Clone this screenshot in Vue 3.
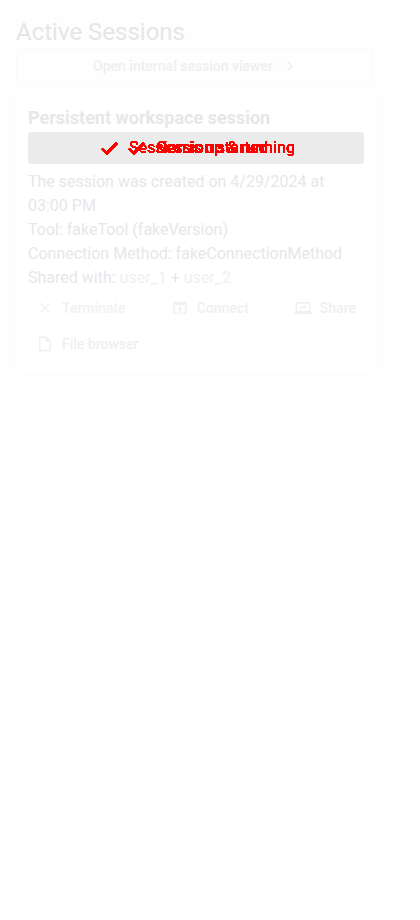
<script setup>
const details = [
  'The session was created on 4/29/2024 at 03:00 PM',
  'Tool: fakeTool (fakeVersion)',
  'Connection Method: fakeConnectionMethod',
]
const states = ['Session is up & running', 'Session started']
const check = 'M9.6 16 5.7 12.1 4.3 13.5 9.6 18.7 20.7 7.6 19.3 6.2z'
const actions = [
  { label: 'Terminate', tone: 'danger', icon: 'M19 6.41 17.59 5 12 10.59 6.41 5 5 6.41 10.59 12 5 17.59 6.41 19 12 13.41 17.59 19 19 17.59 13.41 12z' },
  { label: 'Connect', tone: 'primary', icon: 'M19 4H5c-1.11 0-2 .9-2 2v12c0 1.1.89 2 2 2h4v-2H5V8h14v10h-4v2h4c1.1 0 2-.9 2-2V6c0-1.1-.89-2-2-2zm-7 6-4 4h3v6h2v-6h3l-4-4z' },
  { label: 'Share', tone: 'primary', icon: 'M20 18c1.1 0 1.99-.9 1.99-2L22 6c0-1.1-.9-2-2-2H4c-1.1 0-2 .9-2 2v10c0 1.1.9 2 2 2H0v2h24v-2h-4zM4 6h16v10H4zM8 14h1.5v-1.5c0-.8.4-1.2 1.2-1.2H13V13l3.5-2.7L13 7.7v1.8h-2.3C9 9.5 8 10.6 8 12.2z' },
  { label: 'File browser', tone: 'primary', icon: 'M14 2H6c-1.1 0-1.99.9-1.99 2L4 20c0 1.1.89 2 1.99 2H18c1.1 0 2-.9 2-2V8l-6-6zM6 20V4h7v5h5v11H6z' },
]
</script>

<template>
  <main class="page">
    <h1>Active Sessions</h1>
    <button class="viewer">
      <span>Open internal session viewer</span>
      <svg viewBox="0 0 24 24"><path d="M10 6 8.59 7.41 13.17 12l-4.58 4.59L10 18l6-6z" /></svg>
    </button>
    <section class="card">
      <h2>Persistent workspace session</h2>
      <div class="status">
        <svg class="defs" width="0" height="0">
          <filter id="solid" color-interpolation-filters="sRGB">
            <feComponentTransfer><feFuncA type="linear" slope="40" intercept="-4" /></feComponentTransfer>
          </filter>
        </svg>
        <div v-for="state in states" :key="state" class="state">
          <svg viewBox="0 0 24 24"><path :d="check" /></svg>
          <span>{{ state }}</span>
        </div>
      </div>
      <p v-for="line in details" :key="line">{{ line }}</p>
      <p>Shared with: <span class="user">user_1</span> + <span class="user">user_2</span></p>
      <div class="actions">
        <button v-for="a in actions" :key="a.label" :class="['action', a.tone]">
          <svg viewBox="0 0 24 24"><path fill-rule="evenodd" :d="a.icon" /></svg>
          <span>{{ a.label }}</span>
        </button>
      </div>
    </section>
  </main>
</template>

<style>
body { background: #fefefe; }
</style>

<style scoped>
.page {
  box-sizing: border-box;
  min-height: 920px;
  padding: 16px;
  font-family: Roboto, sans-serif;
  font-size: 16px;
  line-height: 24px;
  color: #e7e7e7;
}
h1 { margin: 0; font-size: 24px; line-height: 32px; font-weight: 400; color: #e6e6e6; }
button { border: 0; background: none; font: 500 14px/20px Roboto, sans-serif; display: flex; align-items: center; padding: 0; }
svg { fill: currentColor; flex: none; }
.viewer {
  box-sizing: border-box;
  width: 357px;
  height: 36px;
  justify-content: center;
  gap: 8px;
  padding-left: 3px;
  border: 1px solid #fafafa;
  border-radius: 4px;
  color: #efefef;
}
.viewer svg { width: 18px; height: 18px; }
.card {
  box-sizing: border-box;
  width: 360px;
  margin-top: 8px;
  padding: 14px 12px 12px;
  height: 282px;
  border-radius: 8px;
  background: #fff;
  box-shadow: 0 1px 3px rgba(0, 0, 0, 0.02);
}
h2 { margin: 0; font-size: 18px; line-height: 24px; font-weight: 700; color: #e7e7e7; }
.status {
  display: grid;
  height: 32px;
  margin: 2px 0 6px;
  border-radius: 4px;
  background: #ebebeb;
  color: #f00;
}
.defs { position: absolute; }
.state {
  grid-area: 1 / 1;
  display: flex;
  align-items: center;
  justify-content: center;
  gap: 8px;
  filter: url(#solid);
}
.state svg { width: 24px; height: 24px; stroke: currentColor; stroke-width: 0.5; }
p { margin: 0; }
.user { color: #f0f0f0; }
.actions { display: flex; flex-wrap: wrap; justify-content: space-between; }
.action { height: 36px; padding: 0 8px; gap: 8px; color: #efefef; }
.action.danger { color: #f1f1f1; }
.action svg { width: 18px; height: 18px; }
</style>
